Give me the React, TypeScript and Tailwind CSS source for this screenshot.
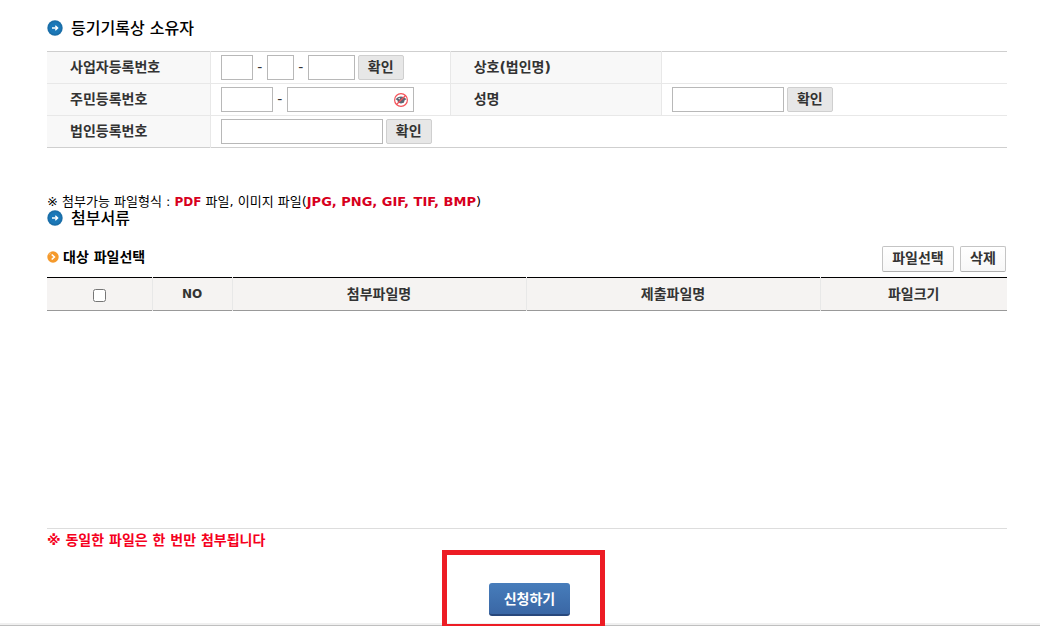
import React from "react";

const EXTENSIONS = "JPG, PNG, GIF, TIF, BMP";

const ArrowBullet: React.FC = () => (
  <svg width="16" height="16" viewBox="0 0 16 16" aria-hidden="true">
    <circle cx="8" cy="8" r="7.7" fill="#1a6ea8" />
    <circle cx="8" cy="8" r="6" fill="#1b78b8" />
    <path d="M5 8h5.5M8.3 5.7 10.7 8l-2.4 2.3" fill="none" stroke="#fff" strokeWidth="1.3" />
  </svg>
);

const ChevronBullet: React.FC = () => (
  <svg width="12" height="12" viewBox="0 0 12 12" aria-hidden="true">
    <circle cx="6" cy="6" r="5.7" fill="#f59a2c" />
    <path d="M4 1.8a4.8 4.8 0 0 0-2 2" fill="none" stroke="#fbc583" />
    <path d="M4.7 3.5 7.4 6 4.7 8.5" fill="none" stroke="#fff" strokeWidth="1.6" />
  </svg>
);

const HiddenEye: React.FC = () => (
  <svg width="16" height="16" viewBox="0 0 16 16" aria-hidden="true">
    <path d="M2.5 7.5C5 3.6 11 3.6 13.5 7.5L11.8 8 10.8 10.8 8 11.6 5.2 10.8 4.2 8Z" fill="#5c6673" />
    <path d="M5 6.6 6.8 5.8v1.8Z" fill="#fff" />
    <circle cx="8" cy="8" r="6.4" fill="none" stroke="#f4535a" strokeWidth="1.2" />
    <path d="M3.5 3.5l9 9" stroke="none" />
    <path d="M12.5 3.5l-9 9" stroke="#f4535a" strokeWidth="1.2" />
  </svg>
);

type FieldProps = {
  label: string;
  className: string;
  type?: string;
};

const Field: React.FC<FieldProps> = ({ label, className, type = "text" }) => (
  <input
    type={type}
    aria-label={label}
    className={`h-[25px] border border-[#b8b8b8] bg-white px-1 text-[13px] outline-none ${className}`}
  />
);

const ConfirmButton: React.FC = () => (
  <button
    type="button"
    className="ml-[3px] flex h-[25px] w-[46px] items-center justify-center rounded-xs border border-[#cfcfcf] bg-[#e7e7e7] pb-[2px] text-sm font-bold"
  >
    확인
  </button>
);

const Dash: React.FC = () => (
  <span className="w-[14px] pb-[2px] text-center text-sm leading-5">-</span>
);

const Title: React.FC<{ children: React.ReactNode }> = ({ children }) => (
  <h2 className="flex h-5 items-center gap-2 text-base leading-5 font-medium text-black">
    <ArrowBullet />
    <span className="pt-[2px]">{children}</span>
  </h2>
);

const labelCell =
  "border-r border-[#e8e8e8] bg-[#f8f8f8] pb-[2px] pl-[23px] text-left text-sm leading-5 font-bold";
const fileHead = "border-r border-[#e8e8e8] font-bold last:border-r-0";
const lightButton =
  "flex h-[26px] items-center justify-center rounded-xs border border-[#c4c4c4] border-b-[#b0b0b0] bg-linear-to-b from-white to-[#f7f7f7] pb-[2px] text-sm font-bold";

const OwnerTable: React.FC = () => (
  <table className="mt-[13px] w-full table-fixed border-y border-[#cfcfcf]">
    <colgroup>
      <col className="w-[17%]" />
      <col className="w-[25%]" />
      <col className="w-[22%]" />
      <col />
    </colgroup>
    <tbody>
      <tr className="h-8 border-b border-[#e8e8e8]">
        <th scope="row" className={labelCell}>사업자등록번호</th>
        <td className="pl-[10px]">
          <div className="flex items-center">
            <Field label="사업자등록번호 1" className="w-8" />
            <Dash />
            <Field label="사업자등록번호 2" className="w-[27px]" />
            <Dash />
            <Field label="사업자등록번호 3" className="w-[47px]" />
            <ConfirmButton />
          </div>
        </td>
        <th scope="row" className={`${labelCell} border-l`}>상호(법인명)</th>
        <td />
      </tr>
      <tr className="h-8 border-b border-[#e8e8e8]">
        <th scope="row" className={labelCell}>주민등록번호</th>
        <td className="pl-[10px]">
          <div className="flex items-center">
            <Field label="주민등록번호 앞자리" className="w-[52px]" />
            <Dash />
            <div className="relative flex">
              <Field label="주민등록번호 뒷자리" type="password" className="w-[127px]" />
              <span className="absolute top-[5px] right-[5px]">
                <HiddenEye />
              </span>
            </div>
          </div>
        </td>
        <th scope="row" className={`${labelCell} border-l`}>성명</th>
        <td className="pl-[10px]">
          <div className="flex items-center">
            <Field label="성명" className="w-[112px]" />
            <ConfirmButton />
          </div>
        </td>
      </tr>
      <tr className="h-8">
        <th scope="row" className={labelCell}>법인등록번호</th>
        <td colSpan={3} className="pl-[10px]">
          <div className="flex items-center">
            <Field label="법인등록번호" className="w-[162px]" />
            <ConfirmButton />
          </div>
        </td>
      </tr>
    </tbody>
  </table>
);

const FileTable: React.FC = () => (
  <div className="min-h-[252px] border-b border-[#ddd]">
    <table className="w-full table-fixed border-t border-b border-t-black border-b-[#999] text-sm">
      <colgroup>
        <col className="w-[105px]" />
        <col className="w-[80px]" />
        <col className="w-[294px]" />
        <col className="w-[294px]" />
        <col />
      </colgroup>
      <thead>
        <tr className="h-[33px] bg-[#f5f3f2]">
          <th scope="col" className={fileHead}>
            <input type="checkbox" aria-label="전체 선택" className="mx-auto mt-[3px] block size-[13px]" />
          </th>
          <th scope="col" className={`${fileHead} text-xs`}>NO</th>
          <th scope="col" className={fileHead}>첨부파일명</th>
          <th scope="col" className={fileHead}>제출파일명</th>
          <th scope="col" className={fileHead}>파일크기</th>
        </tr>
      </thead>
    </table>
  </div>
);

const App: React.FC = () => (
  <div className="bg-white font-['DejaVu_Sans','Noto_Sans_CJK_KR',sans-serif] text-[#333]">
    <main className="pt-[18px] pr-[33px] pl-[47px]">
      <Title>등기기록상 소유자</Title>
      <OwnerTable />

      <p className="mt-[44px] h-4 text-[13px] leading-5 text-black">
        ※ 첨부가능 파일형식 : <b className="text-xs leading-5 text-[#d7001d]">PDF</b> 파일, 이미지 파일(
        <b className="text-[#d7001d]">{EXTENSIONS}</b>)
      </p>
      <Title>첨부서류</Title>

      <div className="mt-[17px] flex h-8 justify-between">
        <h3 className="flex h-6 items-center gap-1 text-sm font-bold text-black">
          <ChevronBullet />
          대상 파일선택
        </h3>
        <div className="flex gap-[6px] pt-px pr-px">
          <button type="button" className={`${lightButton} w-[72px]`}>파일선택</button>
          <button type="button" className={`${lightButton} w-[46px]`}>삭제</button>
        </div>
      </div>
      <FileTable />

      <p className="h-[21px] pt-px text-sm leading-5 font-bold text-[#f5001d]">
        ※ 동일한 파일은 한 번만 첨부됩니다
      </p>
      <div className="relative z-10 flex justify-center pr-[7px]">
        <div className="border-[5px] border-b-2 border-[#ed1c24] pt-7 pr-[30px] pb-[8px] pl-[42px]">
          <button
            type="button"
            className="flex h-[33px] w-[81px] items-center justify-center rounded-[3px] border-b-2 border-[#28487c] bg-linear-to-b from-[#477dbb] to-[#3a67a5] text-sm font-bold text-white"
          >
            신청하기
          </button>
        </div>
      </div>
    </main>
    <footer className="-mt-[3px] h-[3px] border-b border-[#bfbfbf] bg-[#f0f0f0]" />
  </div>
);

export default App;
